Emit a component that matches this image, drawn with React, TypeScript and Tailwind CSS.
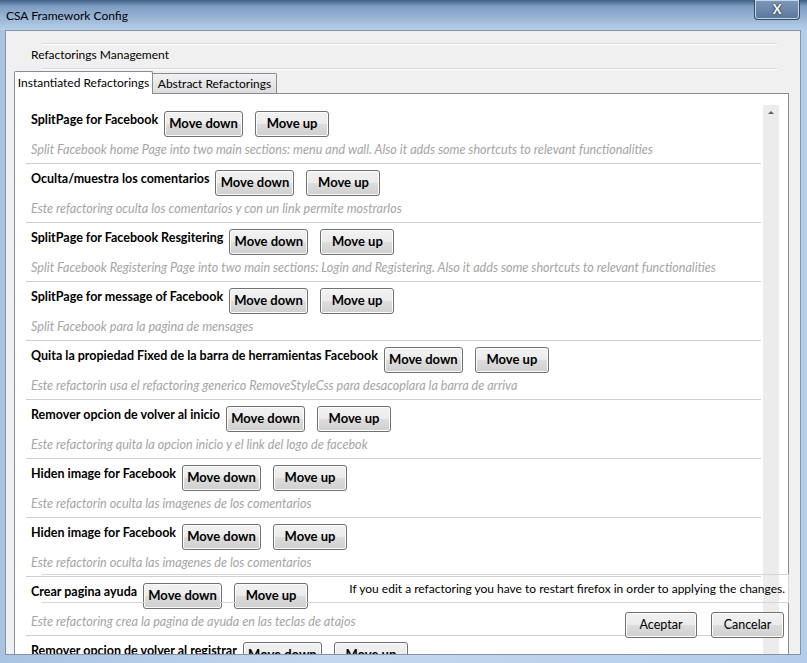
import React from "react";

const ROWS = [
  {
    title: "SplitPage for Facebook",
    desc: "Split Facebook home Page into two main sections: menu and wall. Also it adds some shortcuts to relevant functionalities",
  },
  {
    title: "Oculta/muestra los comentarios",
    desc: "Este refactoring oculta los comentarios y con un link permite mostrarlos",
  },
  {
    title: "SplitPage for Facebook Resgitering",
    desc: "Split Facebook Registering Page into two main sections: Login and Registering. Also it adds some shortcuts to relevant functionalities",
  },
  {
    title: "SplitPage for message of Facebook",
    desc: "Split Facebook para la pagina de mensages",
  },
  {
    title: "Quita la propiedad Fixed de la barra de herramientas Facebook",
    desc: "Este refactorin usa el refactoring generico RemoveStyleCss para desacoplara la barra de arriva",
  },
  {
    title: "Remover opcion de volver al inicio",
    desc: "Este refactoring quita la opcion inicio y el link del logo de facebok",
  },
  {
    title: "Hiden image for Facebook",
    desc: "Este refactorin oculta las imagenes de los comentarios",
  },
  {
    title: "Hiden image for Facebook",
    desc: "Este refactorin oculta las imagenes de los comentarios",
  },
  {
    title: "Crear pagina ayuda",
    desc: "Este refactoring crea la pagina de ayuda en las teclas de atajos",
  },
  {
    title: "Remover opcion de volver al registrar",
    desc: "Este refactoring quita la opcion de volver al registro",
  },
];

const FONT = { fontFamily: "Lato, 'Open Sans', sans-serif" };

function WinButton({ children, bold, className }: { children: React.ReactNode; bold?: boolean; className?: string }) {
  return (
    <div
      className={`flex shrink-0 items-center justify-center rounded-[3px] border border-[#707070] bg-[linear-gradient(#f2f2f2_0%,#ebebeb_50%,#dddddd_50%,#cfcfcf_100%)] shadow-[inset_0_0_0_1px_#fcfcfc] text-black ${
        bold ? "text-[13px] font-bold" : "text-[12.5px]"
      } ${className ?? ""}`}
    >
      {children}
    </div>
  );
}

function Row({ title, desc }: { title: string; desc: string }) {
  return (
    <div className="border-b border-[#d0d0d0] pl-[5px] pt-[6px] pb-[5px]">
      <div className="flex items-start">
        <div className="pt-px text-[12.5px] font-bold leading-[16px] text-black whitespace-nowrap">{title}</div>
        <WinButton bold className="ml-[6px] h-[26px] w-[79px]">Move down</WinButton>
        <WinButton bold className="ml-[12px] h-[26px] w-[74px]">Move up</WinButton>
      </div>
      <div className="mt-[5px] text-[12.6px] italic leading-[16px] text-[#a5a5a5] whitespace-nowrap">{desc}</div>
    </div>
  );
}

export default function App() {
  return (
    <div
      className="relative h-[663px] w-[807px] overflow-hidden bg-[linear-gradient(90deg,#a9c3e2,#c4d8ef_40%,#b5cdea)]"
      style={FONT}
    >
      {/* title bar */}
      <div className="flex h-[30px] items-start justify-between bg-[linear-gradient(#3f5d82_0%,#7e9dc2_20%,#b6cfea_100%)] pl-[6px] pr-[7px]">
        <div className="pt-[8px] text-[12px] leading-[16px] text-black">CSA Framework Config</div>
        <div className="flex h-[20px] w-[46px] items-center justify-center rounded-b-[4px] border border-t-0 border-[#3b4a5e] bg-[linear-gradient(#7d98ba,#5a769b)] shadow-[inset_0_0_0_1px_#c5d5ea] text-[13px] font-bold text-white [text-shadow:0_0_2px_#000]">
          X
        </div>
      </div>

      {/* client */}
      <div className="ml-[5px] mr-[6px] h-[625px] overflow-hidden border border-[#8593a6] bg-[#f0f0f0]">
        <div className="ml-[36px] mr-[23px] mt-[12px] border-t border-[#d9d9d9] shadow-[0_1px_0_#fff]" />
        <div className="pl-[25px] pt-[3px] text-[12px] leading-[16px] text-black">Refactorings Management</div>
        <div className="ml-[36px] mr-[23px] mt-[5px] border-t border-[#d9d9d9] shadow-[0_1px_0_#fff]" />

        {/* tabs */}
        <div className="mt-[2px] flex items-end pl-[8px]">
          <div className="relative z-10 -mb-px flex h-[23px] w-[139px] items-center justify-center rounded-t-[2px] border border-b-0 border-[#898c95] bg-white text-[12px] text-black">
            Instantiated Refactorings
          </div>
          <div className="flex h-[20px] w-[124px] items-center justify-center rounded-tr-[2px] border border-b-0 border-l-0 border-[#898c95] bg-[linear-gradient(#f2f2f2,#dcdcdc)] text-[12px] text-black">
            Abstract Refactorings
          </div>
        </div>

        {/* tab panel */}
        <div className="ml-[8px] mr-[11px] h-[600px] border border-[#898c95] bg-white pl-[11px] pr-[9px] pt-[11px]">
          <div className="flex">
            <div className="min-w-0 flex-1 overflow-hidden">
              {ROWS.map((r, i) => (
                <Row key={i} title={r.title} desc={r.desc} />
              ))}
            </div>
            <div className="ml-[2px] flex h-[560px] w-[16px] shrink-0 justify-center bg-[#ececec] pt-[6px]">
              <div className="h-0 w-0 border-x-[3px] border-b-[3px] border-x-transparent border-b-[#606060]" />
            </div>
          </div>
        </div>
      </div>

      {/* bottom notice box drawn over the list */}
      <div className="absolute left-[42px] right-[18px] top-[574px]">
        <div className="flex h-[29px] items-center justify-end border-y border-r border-[#d5d5d5] pr-[3px] text-[12px] text-black">
          If you edit a refactoring you have to restart firefox in order to applying the changes.
        </div>
        <div className="mt-[9px] flex justify-end gap-[14px] pr-[5px]">
          <WinButton className="h-[26px] w-[72px]">Aceptar</WinButton>
          <WinButton className="h-[26px] w-[73px]">Cancelar</WinButton>
        </div>
      </div>
    </div>
  );
}
